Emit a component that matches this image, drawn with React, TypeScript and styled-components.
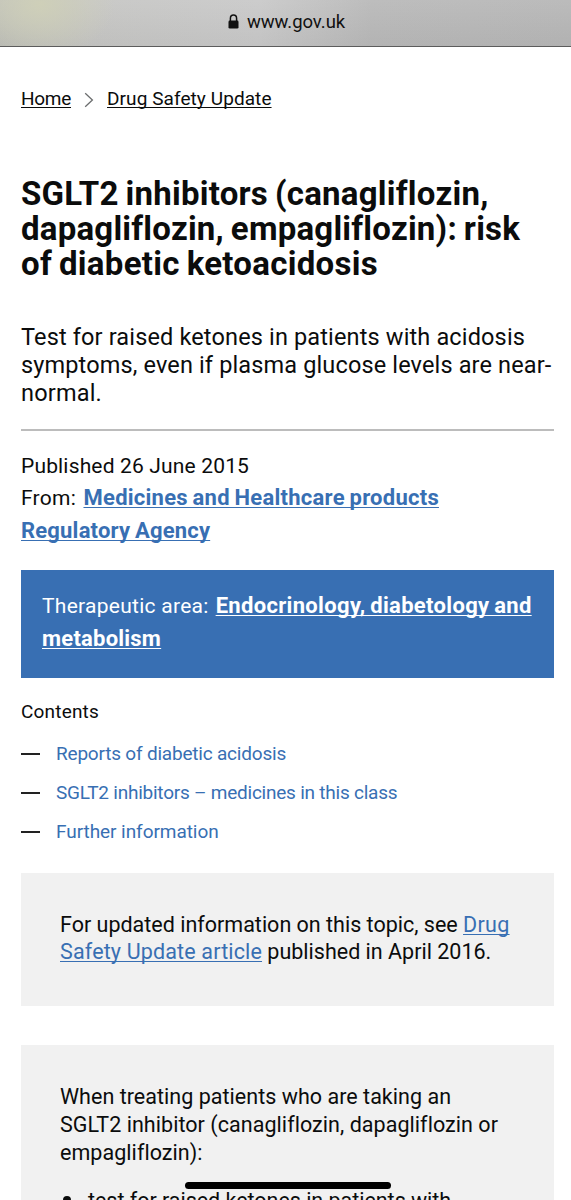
import React from "react";
import styled, { createGlobalStyle } from "styled-components";

const GlobalStyle = createGlobalStyle`
  * { box-sizing: border-box; }
  html, body { margin: 0; background: #fff; }
  h1, p, ul { margin: 0; padding: 0; font-weight: 400; list-style: none; }
`;

const Screen = styled.div`
  position: relative;
  height: 1200px;
  overflow: hidden;
  background: #fff;
  color: #0b0c0c;
  font-family: Roboto, "Liberation Sans", sans-serif;
  white-space: nowrap;
`;

const AddressBar = styled.header`
  display: flex;
  justify-content: center;
  align-items: flex-start;
  gap: 8px;
  height: 47px;
  padding: 10px 0 0 2px;
  border-bottom: 1px solid #5c5c5c;
  color: #111;
  background:
    radial-gradient(ellipse 75px 55px at 40px 4px, rgba(207, 208, 184, 0.95), rgba(207, 208, 184, 0)),
    linear-gradient(180deg, rgba(255, 255, 255, 0.06), rgba(0, 0, 0, 0.03)),
    linear-gradient(90deg, #bebfb9 0, #c6c6c4 90px, #c9c9c9 260px, #b9b9b9 370px, #b7b7b7 100%);
`;

const LockIcon = styled.svg`
  width: 11px;
  height: 15px;
  margin-top: 4px;
`;

const Host = styled.span`
  font-size: 18.5px;
  line-height: 24px;
`;

const Content = styled.main`
  display: flex;
  flex-direction: column;
  padding: 40px 17px 0 21px;
`;

const Track = styled.span<{ $by: number }>`
  letter-spacing: ${(p) => p.$by}px;
`;

const Line = styled(Track)`
  display: block;
`;

const Link = styled.a<{ $by: number; $tone?: string }>`
  letter-spacing: ${(p) => p.$by}px;
  color: ${(p) => p.$tone ?? "#386fb3"};
  text-decoration: underline;
  text-decoration-thickness: 1.4px;
  text-underline-offset: 2.4px;
  text-decoration-skip-ink: none;
`;

const StrongLink = styled(Link)`
  font-size: 22px;
  font-weight: 700;
  word-spacing: -1px;
`;

const Breadcrumbs = styled.nav`
  display: flex;
  align-items: center;
  height: 24px;
  font-size: 19px;
  line-height: 24px;
`;

const Chevron = styled.svg`
  width: 10px;
  height: 16px;
  margin: 1px 13px 0 13px;
`;

const Title = styled.h1`
  margin-top: 66.3px;
  font-size: 33px;
  font-weight: 700;
  line-height: 34.8px;
  word-spacing: -1.5px;
`;

const Lead = styled.p`
  margin-top: 42.4px;
  font-size: 23.5px;
  line-height: 27.8px;
`;

const Rule = styled.hr`
  width: 100%;
  height: 2px;
  margin: 21.2px 0 0;
  border: 0;
  background: #bcbcbc;
`;

const Meta = styled.div`
  margin-top: 19.3px;
  font-size: 21px;
`;

const MetaLine = styled.div<{ $gap?: number; $height: number }>`
  display: flex;
  align-items: baseline;
  gap: ${(p) => p.$gap ?? 0}px;
  height: ${(p) => p.$height}px;
  line-height: 32px;
`;

const Banner = styled.section`
  height: 108px;
  margin-top: 22px;
  padding: 20px 21px;
  background: #386fb3;
  color: #fff;
  font-size: 21px;
`;

const ContentsTitle = styled.p`
  margin-top: 22px;
  font-size: 19px;
  line-height: 24px;
`;

const ContentsList = styled.ul`
  display: flex;
  flex-direction: column;
  gap: 14.7px;
  margin-top: 17.8px;
`;

const ContentsItem = styled.li`
  display: flex;
  align-items: center;
  gap: 16px;
  color: #386fb3;
  font-size: 19px;
  line-height: 24px;

  &::before {
    content: "";
    width: 19px;
    height: 2px;
    background: #222;
  }
`;

const Callout = styled.section<{ $height: number; $top: number }>`
  flex: none;
  height: ${(p) => p.$height}px;
  margin-top: ${(p) => p.$top}px;
  padding: 37.8px 39px 0;
  background: #f1f1f1;
  font-size: 21.5px;
  line-height: 27.8px;
`;

const Bullets = styled.ul`
  margin-top: 20.2px;
`;

const Bullet = styled.li`
  display: flex;
  align-items: center;
  gap: 17px;
  padding-left: 3px;

  &::before {
    content: "";
    width: 8px;
    height: 8px;
    border-radius: 50%;
    background: #0b0c0c;
  }
`;

const HomeIndicator = styled.div`
  position: absolute;
  left: 185px;
  top: 1182px;
  width: 205.5px;
  height: 7px;
  border-radius: 4px;
  background: #000;
`;

const contents = [
  { label: "Reports of diabetic acidosis", by: -0.2 },
  { label: "SGLT2 inhibitors – medicines in this class", by: -0.23 },
  { label: "Further information", by: -0.06 },
];

export default function App() {
  return (
    <Screen>
      <GlobalStyle />
      <AddressBar>
        <LockIcon viewBox="0 0 11 15">
          <path d="M2.4 8V4.4C2.4 2.3 3.6 1 5.5 1s3.1 1.3 3.1 3.4V8" fill="none" stroke="#111" strokeWidth="1.5" />
          <rect x="0.5" y="6.6" width="10" height="7.9" rx="1.3" fill="#111" />
        </LockIcon>
        <Host><Track $by={-0.05}>www.gov.uk</Track></Host>
      </AddressBar>

      <Content>
        <Breadcrumbs>
          <Link href="#" $by={-0.28} $tone="#0b0c0c">Home</Link>
          <Chevron viewBox="0 0 10 16">
            <path d="M1.2 1.2 8.4 8l-7.2 6.8" fill="none" stroke="#6b6d6e" strokeWidth="1.3" />
          </Chevron>
          <Link href="#" $by={0.08} $tone="#0b0c0c">Drug Safety Update</Link>
        </Breadcrumbs>

        <Title>
          <Line $by={0.24}>SGLT2 inhibitors (canagliflozin,</Line>
          <Line $by={0.22}>dapagliflozin, empagliflozin): risk</Line>
          <Line $by={0.28}>of diabetic ketoacidosis</Line>
        </Title>

        <Lead>
          <Line $by={0.15}>Test for raised ketones in patients with acidosis</Line>
          <Line $by={0.14}>symptoms, even if plasma glucose levels are near-</Line>
          <Line $by={0.19}>normal.</Line>
        </Lead>
        <Rule />

        <Meta>
          <MetaLine $height={32}><Track $by={0.16}>Published 26 June 2015</Track></MetaLine>
          <MetaLine $height={33.4} $gap={7.5}>
            <Track $by={0.25}>From:</Track>
            <StrongLink href="#" $by={0.25}>Medicines and Healthcare products</StrongLink>
          </MetaLine>
          <MetaLine $height={33}><StrongLink href="#" $by={0.19}>Regulatory Agency</StrongLink></MetaLine>
        </Meta>

        <Banner>
          <MetaLine $height={33} $gap={7}>
            <Track $by={0.27}>Therapeutic area:</Track>
            <StrongLink href="#" $by={0.32} $tone="#fff">Endocrinology, diabetology and</StrongLink>
          </MetaLine>
          <MetaLine $height={33}><StrongLink href="#" $by={0.22} $tone="#fff">metabolism</StrongLink></MetaLine>
        </Banner>

        <ContentsTitle><Track $by={0.19}>Contents</Track></ContentsTitle>
        <ContentsList>
          {contents.map((item) => (
            <ContentsItem key={item.label}><Track $by={item.by}>{item.label}</Track></ContentsItem>
          ))}
        </ContentsList>

        <Callout $height={133} $top={29.2}>
          <Line $by={0.0}>
            For updated information on this topic, see <Link href="#" $by={0.3}>Drug</Link>
          </Line>
          <Line $by={0}>
            <Link href="#" $by={0.15}>Safety Update article</Link> published in April 2016.
          </Line>
        </Callout>

        <Callout $height={180} $top={39.5}>
          <Line $by={0.03}>When treating patients who are taking an</Line>
          <Line $by={0.05}>SGLT2 inhibitor (canagliflozin, dapagliflozin or</Line>
          <Line $by={0.05}>empagliflozin):</Line>
          <Bullets>
            <Bullet><Track $by={-0.03}>test for raised ketones in patients with</Track></Bullet>
          </Bullets>
        </Callout>
      </Content>
      <HomeIndicator />
    </Screen>
  );
}
